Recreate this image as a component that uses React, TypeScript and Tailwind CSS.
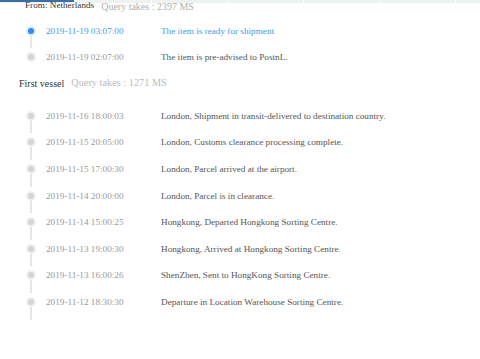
const first = [
  { time: "2019-11-19 03:07:00", text: "The item is ready for shipment", active: true },
  { time: "2019-11-19 02:07:00", text: "The item is pre-advised to PostnL." },
];

const second = [
  { time: "2019-11-16 18:00:03", text: "London, Shipment in transit-delivered to destination country." },
  { time: "2019-11-15 20:05:00", text: "London, Customs clearance processing complete." },
  { time: "2019-11-15 17:00:30", text: "London, Parcel arrived at the airport." },
  { time: "2019-11-14 20:00:00", text: "London, Parcel is in clearance." },
  { time: "2019-11-14 15:00:25", text: "Hongkong, Departed Hongkong Sorting Centre." },
  { time: "2019-11-13 19:00:30", text: "Hongkong, Arrived at Hongkong Sorting Centre." },
  { time: "2019-11-13 16:00:26", text: "ShenZhen, Sent to HongKong Sorting Centre." },
  { time: "2019-11-12 18:30:30", text: "Departure in Location Warehouse Sorting Centre." },
];

type Item = { time: string; text: string; active?: boolean };

const Row = ({ item, line }: { item: Item; line: boolean }) => {
  return (
    <div className="flex items-start h-[26.6px]">
      <div className="ml-[26px] w-[10px] flex flex-col items-center">
        <div
          className={
            "w-[10px] h-[10px] rounded-full flex items-center justify-center " +
            (item.active ? "bg-[#d9ebfc]" : "bg-[#f0f0f0]")
          }
        >
          <div className={"w-[6px] h-[6px] rounded-full " + (item.active ? "bg-[#2b8cf0]" : "bg-[#d4d4d4]")} />
        </div>
        {line && <div className="w-[2px] h-[12.6px] bg-[#e6e6e6]" />}
      </div>
      <div className="ml-[10px] h-[10px] flex items-center text-[9.2px] leading-[10px]">
        <span className={"w-[115px] " + (item.active ? "text-[#3d9cf0]" : "text-[#999]")}>{item.time}</span>
        <span className={item.active ? "text-[#3d9cf0]" : "text-[#555]"}>{item.text}</span>
      </div>
    </div>
  );
};

export default function App() {
  return (
    <div className="relative w-[480px] h-[359px] bg-white overflow-hidden font-[family-name:Liberation_Serif,serif]">
      {/* top progress strip */}
      <div className="absolute top-0 left-0 right-0 flex gap-[1px]">
        {[0, 1, 2, 3, 4, 5, 6].map((i) => (
          <div key={i} className="w-[75px] shrink-0 h-[3px] bg-[#eef3f2]" />
        ))}
      </div>
      <div className="absolute top-0 left-0 w-[74px] h-[2px] bg-[#3a6ea8]" />

      <div className="relative">
        <div className="pl-[25px] h-[12px] flex items-center">
          <span className="text-[9.2px] text-[#333]">From: Netherlands</span>
          <span className="ml-[7px] text-[10px] text-[#b0b0b0]">Query takes : 2397 MS</span>
        </div>

        <div className="mt-[13.5px]">
          {first.map((it, i) => (
            <Row key={it.time} item={it} line={i < first.length - 1} />
          ))}
        </div>

        <div className="pl-[19px] h-[12px] -mt-[1.6px] flex items-center">
          <span className="text-[10px] text-[#333]">First vessel</span>
          <span className="ml-[7px] text-[10.3px] text-[#bbb]">Query takes : 1271 MS</span>
        </div>

        <div className="mt-[21.7px]">
          {second.map((it) => (
            <Row key={it.time} item={it} line={true} />
          ))}
        </div>
      </div>
    </div>
  );
}
